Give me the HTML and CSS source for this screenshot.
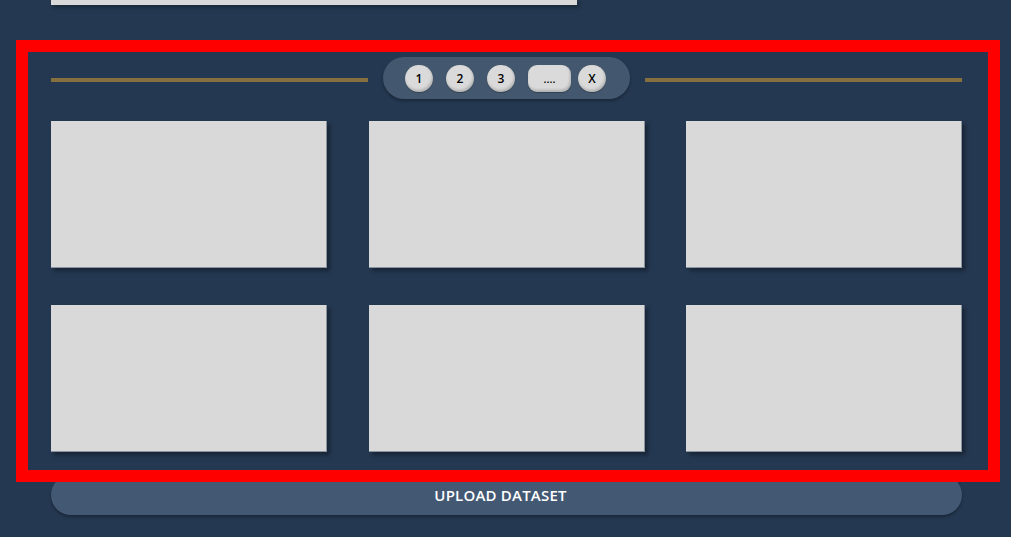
FILE: index.html
```html
<!DOCTYPE html>
<html lang="en">
<head>
<meta charset="utf-8">
<title>Dataset gallery</title>
<link rel="stylesheet" href="styles.css">
</head>
<body>
<div class="page">
  <div class="top-card"></div>
  <section class="gallery">
    <div class="pager-row">
      <div class="rule"></div>
      <nav class="pager">
        <button class="page-btn">1</button>
        <button class="page-btn">2</button>
        <button class="page-btn">3</button>
        <button class="page-btn wide">....</button>
        <button class="page-btn close">X</button>
      </nav>
      <div class="rule"></div>
    </div>
    <div class="grid">
      <div class="card"></div>
      <div class="card"></div>
      <div class="card"></div>
      <div class="card"></div>
      <div class="card"></div>
      <div class="card"></div>
    </div>
  </section>
  <button class="upload">UPLOAD DATASET</button>
</div>
</body>
</html>
```
FILE: styles.css
```css
html, body {
  margin: 0;
  padding: 0;
  background: #243851;
  font-family: "Open Sans", "Noto Sans", sans-serif;
  height: 100%;
  overflow: hidden;
}

.page {
  padding: 0 49px 0 51px;
  display: flex;
  flex-direction: column;
}

.top-card {
  width: 526px;
  height: 5px;
  background: #d9d9d9;
  box-shadow: 2px 2px 4px rgba(0, 0, 0, 0.35);
}

.gallery {
  position: relative;
  margin-top: 52px;
}

.gallery::after {
  content: "";
  position: absolute;
  top: -17px;
  bottom: -30px;
  left: -35px;
  right: -38px;
  border: 12px solid #ff0000;
  pointer-events: none;
  z-index: 2;
}

.pager-row {
  display: flex;
  align-items: center;
  gap: 15px;
}

.rule {
  flex: 1;
  height: 4px;
  margin-top: 4px;
  background: #86703f;
}

.pager {
  display: flex;
  align-items: center;
  height: 42px;
  padding: 0 24px 0 22px;
  border-radius: 21px;
  background: #43586f;
  box-shadow: 0 2px 3px rgba(0, 0, 0, 0.3);
}

.page-btn {
  width: 28px;
  height: 27px;
  padding: 0;
  border: none;
  border-radius: 14px;
  background: #dadada;
  color: #000;
  font-family: "Open Sans", sans-serif;
  font-size: 12px;
  font-weight: 600;
  margin-right: 13px;
  box-shadow: inset -1px -2px 3px rgba(0, 0, 0, 0.2), 0 1px 1px rgba(0, 0, 0, 0.25);
}

.page-btn.wide {
  width: 43px;
  border-radius: 9px;
  margin-right: 7px;
  font-size: 11px;
}

.page-btn.close {
  margin-right: 0;
}

.grid {
  margin-top: 22px;
  display: grid;
  grid-template-columns: repeat(3, 276px);
  justify-content: space-between;
  grid-auto-rows: 147px;
  row-gap: 37px;
}

.card {
  background: #d9d9d9;
  border-right: 1px solid #8b95a0;
  border-bottom: 1px solid #8b95a0;
  box-shadow: 3px 3px 4px rgba(0, 0, 0, 0.35);
}

.upload {
  margin-top: 23px;
  height: 40px;
  padding: 0 12px 0 0;
  border: none;
  border-radius: 20px;
  background: #435873;
  color: #ffffff;
  font-family: "Open Sans", sans-serif;
  font-size: 15px;
  font-weight: 600;
  letter-spacing: 0.2px;
  box-shadow: 0 2px 3px rgba(0, 0, 0, 0.3);
}
```
